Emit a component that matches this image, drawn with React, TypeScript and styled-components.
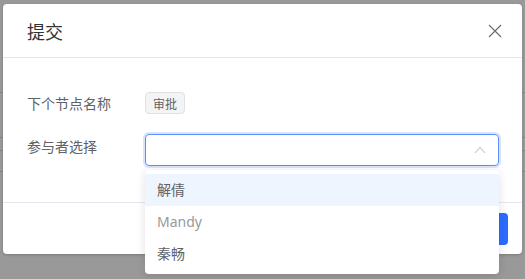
import React from 'react'
import styled, { createGlobalStyle } from 'styled-components'

const GlobalStyle = createGlobalStyle`
  html, body {
    margin: 0;
    padding: 0;
    background: #ffffff;
  }
  body {
    font-family: "Noto Sans", "Noto Sans CJK SC", sans-serif;
  }
`

const Page = styled.div`
  position: relative;
  width: 525px;
  height: 279px;
  overflow: hidden;
`

const BackRow = styled.div<{ height: number }>`
  height: ${({ height }) => height}px;
  border-bottom: 1px solid #dcdfe6;
`

const Overlay = styled.div`
  position: absolute;
  inset: 0;
  background: rgba(0, 0, 0, 0.4);
  padding: 4px 3px 0 3px;
`

const Dialog = styled.div`
  position: relative;
  width: 519px;
  background: #ffffff;
  border-radius: 4px;
  box-shadow: 0 1px 3px rgba(0, 0, 0, 0.2);
`

const Header = styled.div`
  height: 54px;
  display: flex;
  align-items: center;
  justify-content: space-between;
  padding: 0 20px 0 24px;
  border-bottom: 1px solid #e4e7ed;
  box-sizing: border-box;
`

const Title = styled.span`
  font-size: 18px;
  color: #303133;
  font-family: "Noto Sans CJK SC", sans-serif;
`

const CloseButton = styled.button`
  border: 0;
  background: none;
  padding: 0;
  width: 14px;
  height: 14px;
  display: flex;
  cursor: pointer;
`

const Body = styled.div`
  padding: 30px 23px 36px 24px;
  border-bottom: 1px solid #e4e7ed;
`

const FormItem = styled.div<{ gap?: number }>`
  display: flex;
  align-items: flex-start;
  margin-bottom: ${({ gap }) => gap ?? 0}px;
`

const Label = styled.div<{ lineHeight: number }>`
  width: 118px;
  font-size: 14px;
  color: #606266;
  line-height: ${({ lineHeight }) => lineHeight}px;
  font-family: "Noto Sans CJK SC", sans-serif;
`

const Content = styled.div<{ lineHeight?: number }>`
  flex: 1;
  position: relative;
  display: flex;
  align-items: center;
  min-height: ${({ lineHeight }) => lineHeight ?? 32}px;
`

const Tag = styled.span`
  display: inline-flex;
  align-items: center;
  height: 22px;
  padding: 0 7px;
  font-size: 12px;
  color: #606266;
  background: #f4f4f5;
  border: 1px solid #e0e1e4;
  border-radius: 4px;
  box-sizing: border-box;
  font-family: "Noto Sans CJK SC", sans-serif;
`

const SelectBox = styled.div`
  width: 100%;
  height: 32px;
  box-sizing: border-box;
  border: 1px solid #5b8ef8;
  border-radius: 4px;
  box-shadow: 0 0 0 2px #d9e5fd;
  display: flex;
  align-items: center;
  justify-content: flex-end;
  padding: 0 12px;
`

const Dropdown = styled.ul`
  position: absolute;
  top: 36px;
  left: 0;
  right: 0;
  margin: 0;
  padding: 4px 0;
  list-style: none;
  background: #ffffff;
  border-radius: 4px;
  box-shadow: 0 2px 10px rgba(0, 0, 0, 0.12);
  z-index: 2;
`

const Option = styled.li<{ active?: boolean; muted?: boolean }>`
  height: 32px;
  line-height: 32px;
  padding: 0 12px;
  font-size: 14px;
  color: ${({ muted }) => (muted ? '#999999' : '#606266')};
  background: ${({ active }) => (active ? '#eff5fe' : 'transparent')};
  font-family: "Noto Sans", "Noto Sans CJK SC", sans-serif;
`

const Footer = styled.div`
  display: flex;
  justify-content: flex-end;
  padding: 10px 14px 9px 20px;
`

const PrimaryButton = styled.button`
  height: 32px;
  width: 64px;
  border: 0;
  border-radius: 4px;
  background: #2b6cff;
  color: #ffffff;
  font-size: 14px;
  font-family: "Noto Sans CJK SC", sans-serif;
`

const CloseIcon = () => (
  <svg width="14" height="14" viewBox="0 0 14 14">
    <path d="M1 1 L13 13 M13 1 L1 13" stroke="#6b6d71" strokeWidth="1.2" fill="none" />
  </svg>
)

const ArrowUp = () => (
  <svg width="12" height="8" viewBox="0 0 12 8">
    <path d="M1 7 L6 1.5 L11 7" stroke="#c0c4cc" strokeWidth="1.1" fill="none" />
  </svg>
)

const participants = ['解倩', 'Mandy', '秦畅']

export default function App() {
  return (
    <Page>
      <GlobalStyle />
      <BackRow height={92} />
      <BackRow height={44} />
      <BackRow height={12} />
      <BackRow height={20} />
      <Overlay>
        <Dialog>
          <Header>
            <Title>提交</Title>
            <CloseButton aria-label="关闭">
              <CloseIcon />
            </CloseButton>
          </Header>
          <Body>
            <FormItem gap={16}>
              <Label lineHeight={30}>下个节点名称</Label>
              <Content lineHeight={30}>
                <Tag>审批</Tag>
              </Content>
            </FormItem>
            <FormItem>
              <Label lineHeight={24}>参与者选择</Label>
              <Content>
                <SelectBox>
                  <ArrowUp />
                </SelectBox>
                <Dropdown>
                  {participants.map((name, index) => (
                    <Option key={name} active={index === 0} muted={name === 'Mandy'}>
                      {name}
                    </Option>
                  ))}
                </Dropdown>
              </Content>
            </FormItem>
          </Body>
          <Footer>
            <PrimaryButton>提交</PrimaryButton>
          </Footer>
        </Dialog>
      </Overlay>
    </Page>
  )
}
